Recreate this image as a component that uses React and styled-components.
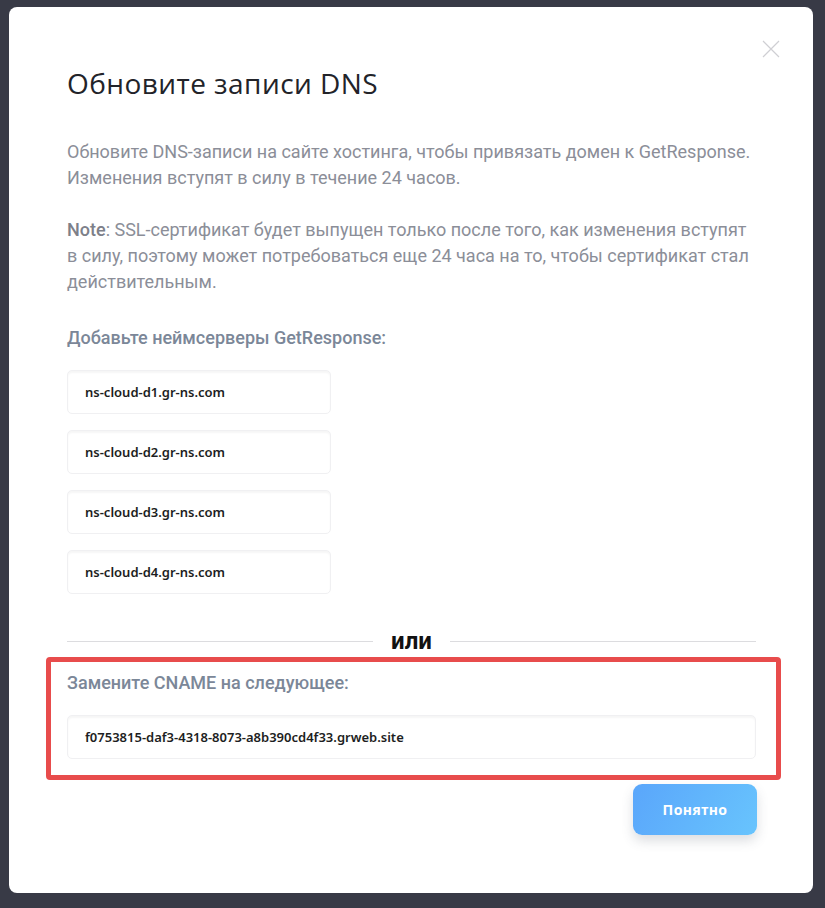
import React from "react";
import styled, { createGlobalStyle } from "styled-components";

const GlobalStyle = createGlobalStyle`
  html, body {
    margin: 0;
    background: #383a46;
  }
  #root {
    padding: 7px 12px 15px 9px;
  }
`;

const SCModal = styled.div`
  position: relative;
  box-sizing: border-box;
  width: 804px;
  height: 886px;
  background: #ffffff;
  border-radius: 8px;
  padding: 58px 57px 0 58px;
  font-family: Roboto, "Liberation Sans", sans-serif;
`;

const SCClose = styled.button`
  position: absolute;
  top: 33px;
  right: 33px;
  width: 18px;
  height: 18px;
  padding: 0;
  border: none;
  background: none;
  cursor: pointer;
`;

const SCTitle = styled.h1`
  margin: 0;
  font-family: "Open Sans", sans-serif;
  font-weight: 400;
  font-size: 28px;
  line-height: 36px;
  letter-spacing: 0.45px;
  color: #222329;
`;

const SCText = styled.p`
  margin: ${(p) => p.$top || 0}px 0 0;
  font-size: 18px;
  line-height: 26px;
  color: #8b8e98;

  b {
    font-weight: 500;
    color: #7d8089;
  }
`;

const SCLabel = styled.div`
  margin-top: ${(p) => p.$top || 0}px;
  font-size: 18px;
  font-weight: 500;
  line-height: 24px;
  color: #7b8798;
`;

const SCList = styled.div`
  display: flex;
  flex-direction: column;
  gap: 16px;
  margin-top: ${(p) => p.$top || 0}px;
`;

const SCField = styled.div`
  box-sizing: border-box;
  width: ${(p) => p.$width || "100%"};
  height: 44px;
  display: flex;
  align-items: center;
  padding: 0 17px;
  border: 1px solid #f0f0f2;
  border-radius: 5px;
  box-shadow: inset 0 2px 2px rgba(0, 0, 0, 0.04);
  font-family: "Noto Sans", sans-serif;
  font-weight: 600;
  font-size: 13px;
  color: #1d1e22;
`;

const SCDivider = styled.div`
  display: flex;
  align-items: center;
  gap: 18px;
  margin-top: 35px;
  font-weight: 700;
  font-size: 24px;
  line-height: 24px;
  color: #111111;

  &::before,
  &::after {
    content: "";
    flex: 1;
    height: 1px;
    background: #dcdcdf;
  }
`;

const SCHighlight = styled.div`
  margin: 4px -25px 0 -21px;
  padding: 9px 20px 16px 16px;
  border: 5px solid #e84c4c;
  border-radius: 4px;
`;

const SCFooter = styled.div`
  display: flex;
  justify-content: flex-end;
  margin-top: 4px;
  margin-right: -1px;
`;

const SCButton = styled.button`
  width: 124px;
  height: 51px;
  border: none;
  border-radius: 9px;
  background: linear-gradient(120deg, #5aa6fb 0%, #68c4fd 100%);
  box-shadow: 0 6px 12px rgba(60, 70, 90, 0.18);
  color: #ffffff;
  font-family: "Noto Sans", sans-serif;
  font-weight: 700;
  font-size: 14px;
  letter-spacing: 0.4px;
  cursor: pointer;
`;

const servers = [
  "ns-cloud-d1.gr-ns.com",
  "ns-cloud-d2.gr-ns.com",
  "ns-cloud-d3.gr-ns.com",
  "ns-cloud-d4.gr-ns.com",
];

export default function App() {
  return (
    <>
      <GlobalStyle />
      <SCModal>
        <SCClose aria-label="Закрыть">
          <svg width="18" height="18" viewBox="0 0 18 18">
            <path d="M1 1L17 17M17 1L1 17" stroke="#cfcfd3" strokeWidth="1.2" />
          </svg>
        </SCClose>
        <SCTitle>Обновите записи DNS</SCTitle>
        <SCText $top={38}>
          Обновите DNS-записи на сайте хостинга, чтобы привязать домен к GetResponse.
          <br />
          Изменения вступят в силу в течение 24 часов.
        </SCText>
        <SCText $top={26}>
          <b>Note</b>: SSL-сертификат будет выпущен только после того, как изменения вступят
          <br />
          в силу, поэтому может потребоваться еще 24 часа на то, чтобы сертификат стал
          <br />
          действительным.
        </SCText>
        <SCLabel $top={31}>Добавьте неймсерверы GetResponse:</SCLabel>
        <SCList $top={20}>
          {servers.map((s) => (
            <SCField key={s} $width="264px">
              {s}
            </SCField>
          ))}
        </SCList>
        <SCDivider>или</SCDivider>
        <SCHighlight>
          <SCLabel>Замените CNAME на следующее:</SCLabel>
          <SCList $top={20}>
            <SCField>f0753815-daf3-4318-8073-a8b390cd4f33.grweb.site</SCField>
          </SCList>
        </SCHighlight>
        <SCFooter>
          <SCButton>Понятно</SCButton>
        </SCFooter>
      </SCModal>
    </>
  );
}
